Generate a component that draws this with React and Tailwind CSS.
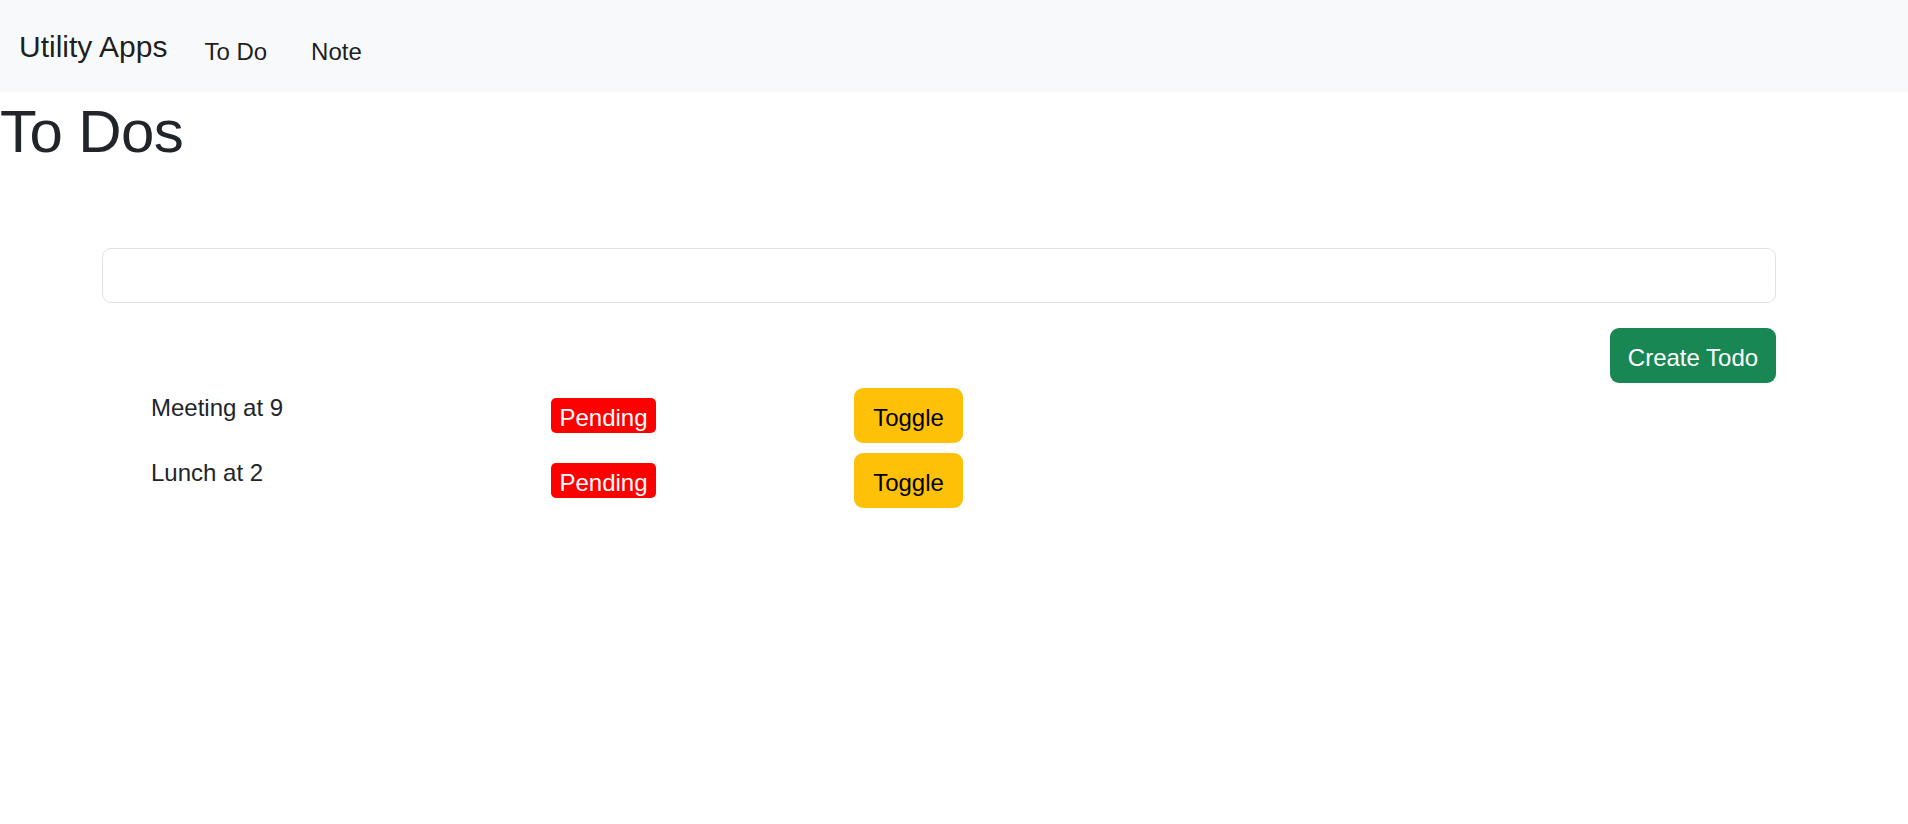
import React from 'react';

const todos = [
  { id: 1, text: 'Meeting at 9', done: false },
  { id: 2, text: 'Lunch at 2', done: false },
];

const NavBar = () => (
  <nav className="h-[92px] bg-[#f8f9fa] flex items-start px-[19px]">
    <span className="pt-[24px] text-[30px] leading-[45px] text-black/90">Utility Apps</span>
    <div className="flex items-start pt-[34px] ml-[37px] gap-[44px]">
      <a className="text-[24px] leading-[36px] text-black/90">To Do</a>
      <a className="text-[24px] leading-[36px] text-black/90">Note</a>
    </div>
  </nav>
);

const TodoRow = ({ todo }) => (
  <div className="flex items-start">
    <div className="w-[400px] pt-[2px] text-[24px] leading-[36px] text-[#212529]">{todo.text}</div>
    <div className="w-[303px] pt-[10px]">
      <span className="block w-[105px] h-[35px] pt-[5px] text-center text-[24px] leading-[29px] text-white bg-[#ff0000] rounded-[5px]">
        {todo.done ? 'Done' : 'Pending'}
      </span>
    </div>
    <button className="w-[109px] h-[55px] pt-[12px] pb-[7px] text-[24px] leading-[36px] text-black bg-[#ffc107] rounded-[9px]">
      Toggle
    </button>
  </div>
);

export default function App() {
  return (
    <div className="min-h-screen bg-white font-['Liberation_Sans',Arial,sans-serif]">
      <NavBar />
      <h1 className="mt-[4px] text-[60px] leading-[72px] tracking-[-0.6px] font-medium text-[#212529]">To Dos</h1>

      <div className="ml-[102px] w-[1674px] mt-[80px]">
        <input
          type="text"
          className="block w-full h-[55px] px-[18px] text-[24px] border border-[#dee2e6] rounded-[9px] outline-none"
        />
        <div className="flex justify-end mt-[25px]">
          <button className="w-[166px] h-[55px] pt-[12px] pb-[7px] text-[24px] leading-[36px] text-white bg-[#198754] rounded-[9px]">
            Create Todo
          </button>
        </div>
        <div className="flex flex-col gap-[10px] mt-[5px] ml-[49px]">
          {todos.map((t) => (
            <TodoRow key={t.id} todo={t} />
          ))}
        </div>
      </div>
    </div>
  );
}
